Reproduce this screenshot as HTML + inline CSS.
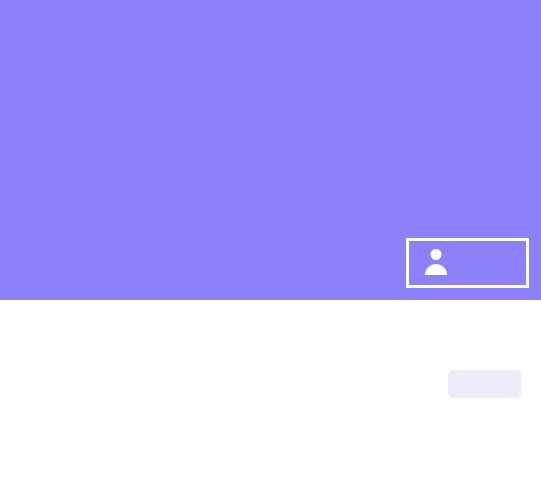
<!DOCTYPE html>
<html><head><meta charset="utf-8"><style>
html,body{margin:0;padding:0;width:541px;height:487px;background:#fff;overflow:hidden;position:relative}
.hero{position:absolute;left:0;top:0;width:541px;height:300px;background:#8c81f9}
.btn{position:absolute;left:406px;top:238px;width:117px;height:44px;border:3px solid #fff}
.pill{position:absolute;left:448px;top:370px;width:73px;height:28px;background:#eeebfb;border-radius:5px}
</style></head><body>
<div class="hero"></div>
<div class="btn"></div>
<svg style="position:absolute;left:420px;top:245px" width="34" height="34" viewBox="0 0 34 34">
<circle cx="16" cy="9.5" r="5.5" fill="#fff"/>
<path d="M5 30 A11 11 0 0 1 27 30 Z" fill="#fff"/>
</svg>
<div class="pill"></div>
</body></html>
